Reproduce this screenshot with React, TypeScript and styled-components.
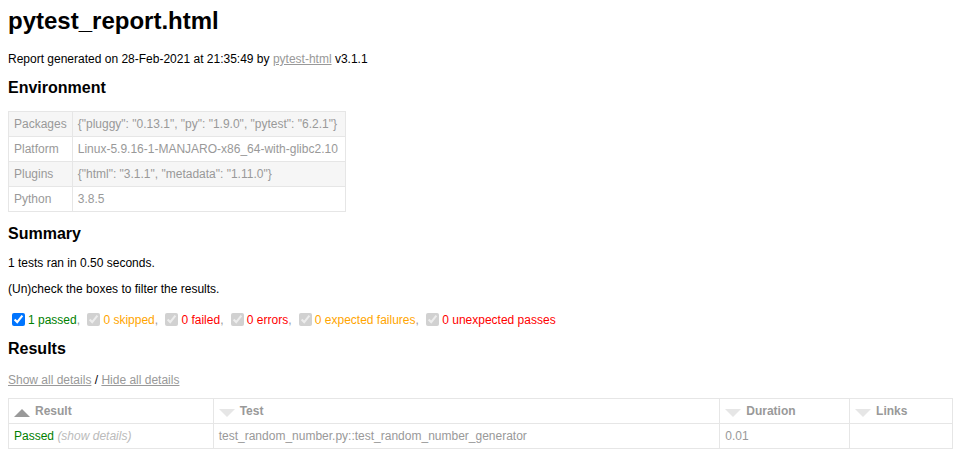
import styled, { createGlobalStyle } from "styled-components";

const GlobalStyle = createGlobalStyle`
  body {
    margin: 0 8px 8px;
    font-family: Helvetica, "Liberation Sans", Arial, sans-serif;
    font-size: 12px;
    min-width: 800px;
    color: #999;
  }
`;

const Title = styled.h1`
  font-size: 24px;
  color: black;
  margin: 7px 0 17px;
`;

const Heading = styled.h2<{ $top?: number; $bottom?: number }>`
  font-size: 16px;
  color: black;
  margin: ${(p) => p.$top ?? 13}px 0 ${(p) => p.$bottom ?? 13}px;
`;

const Para = styled.p<{ $bottom?: number }>`
  color: black;
  margin: 12px 0 ${(p) => p.$bottom ?? 12}px;
`;

const Link = styled.a`
  color: #999;
`;

const EnvTable = styled.table`
  border-collapse: collapse;

  tr:nth-child(odd) {
    background-color: #f6f6f6;
  }

  td {
    padding: 5px;
    border: 1px solid #e6e6e6;
  }

  td + td {
    padding-right: 7px;
  }
`;

const FilterBar = styled.div`
  padding-top: 2px;
  margin-bottom: 6px;
`;

const Check = styled.input`
  margin: 3px 3px 3px 4px;
  vertical-align: -2px;
`;

const Count = styled.span<{ $tone: string }>`
  color: ${(p) => p.$tone};
`;

const ResultsTable = styled.table`
  border-collapse: collapse;
  border: 1px solid #e6e6e6;
  color: #999;
  font-size: 12px;
  width: 100%;
`;

const HeadCell = styled.th<{ $w: number }>`
  width: ${(p) => p.$w}px;
  padding: 5px;
  border: 1px solid #e6e6e6;
  text-align: left;
  font-weight: bold;
  cursor: pointer;
`;

const Cell = styled.td`
  padding: 5px;
  border: 1px solid #e6e6e6;
  text-align: left;
`;

const SortIcon = styled.div<{ $active?: boolean }>`
  font-size: 0;
  float: left;
  margin-right: 5px;
  margin-top: 5px;
  width: 0;
  height: 0;
  border-left: 8px solid transparent;
  border-right: 8px solid transparent;
  ${(p) =>
    p.$active
      ? "border-bottom: 8px solid #999;"
      : "border-top: 8px solid #E6E6E6;"}
`;

const Outcome = styled.span`
  color: green;
`;

const Expander = styled.span`
  color: #bbb;
  font-style: italic;
  cursor: pointer;
`;

const environment = [
  ["Packages", '{"pluggy": "0.13.1", "py": "1.9.0", "pytest": "6.2.1"}'],
  ["Platform", "Linux-5.9.16-1-MANJARO-x86_64-with-glibc2.10"],
  ["Plugins", '{"html": "3.1.1", "metadata": "1.11.0"}'],
  ["Python", "3.8.5"],
];

const filters = [
  { label: "1 passed", tone: "green", on: true },
  { label: "0 skipped", tone: "orange" },
  { label: "0 failed", tone: "red" },
  { label: "0 errors", tone: "red" },
  { label: "0 expected failures", tone: "orange" },
  { label: "0 unexpected passes", tone: "red" },
];

const columns = [
  { name: "Result", width: 194, active: true },
  { name: "Test", width: 496 },
  { name: "Duration", width: 119 },
  { name: "Links", width: 92 },
];

export default function App() {
  return (
    <>
      <GlobalStyle />
      <Title>pytest_report.html</Title>
      <Para>
        Report generated on 28-Feb-2021 at 21:35:49 by{" "}
        <Link href="#">pytest-html</Link> v3.1.1
      </Para>

      <Heading $bottom={14}>Environment</Heading>
      <EnvTable>
        <tbody>
          {environment.map(([key, value]) => (
            <tr key={key}>
              <td>{key}</td>
              <td>{value}</td>
            </tr>
          ))}
        </tbody>
      </EnvTable>

      <Heading>Summary</Heading>
      <Para>1 tests ran in 0.50 seconds. </Para>
      <Para>(Un)check the boxes to filter the results.</Para>
      <FilterBar>
        {filters.map((f, i) => (
          <span key={f.label}>
            <Check type="checkbox" defaultChecked disabled={!f.on} />
            <Count $tone={f.tone}>{f.label}</Count>
            {i < filters.length - 1 ? ", " : ""}
          </span>
        ))}
      </FilterBar>

      <Heading $top={11} $bottom={15}>
        Results
      </Heading>
      <Para $bottom={11}>
        <Link href="#">Show all details</Link> / <Link href="#">Hide all details</Link>
      </Para>
      <ResultsTable>
        <thead>
          <tr>
            {columns.map((c) => (
              <HeadCell key={c.name} $w={c.width}>
                <SortIcon $active={c.active} />
                {c.name}
              </HeadCell>
            ))}
          </tr>
        </thead>
        <tbody>
          <tr>
            <Cell>
              <Outcome>Passed</Outcome> <Expander>(show details)</Expander>
            </Cell>
            <Cell>test_random_number.py::test_random_number_generator</Cell>
            <Cell>0.01</Cell>
            <Cell />
          </tr>
        </tbody>
      </ResultsTable>
    </>
  );
}
